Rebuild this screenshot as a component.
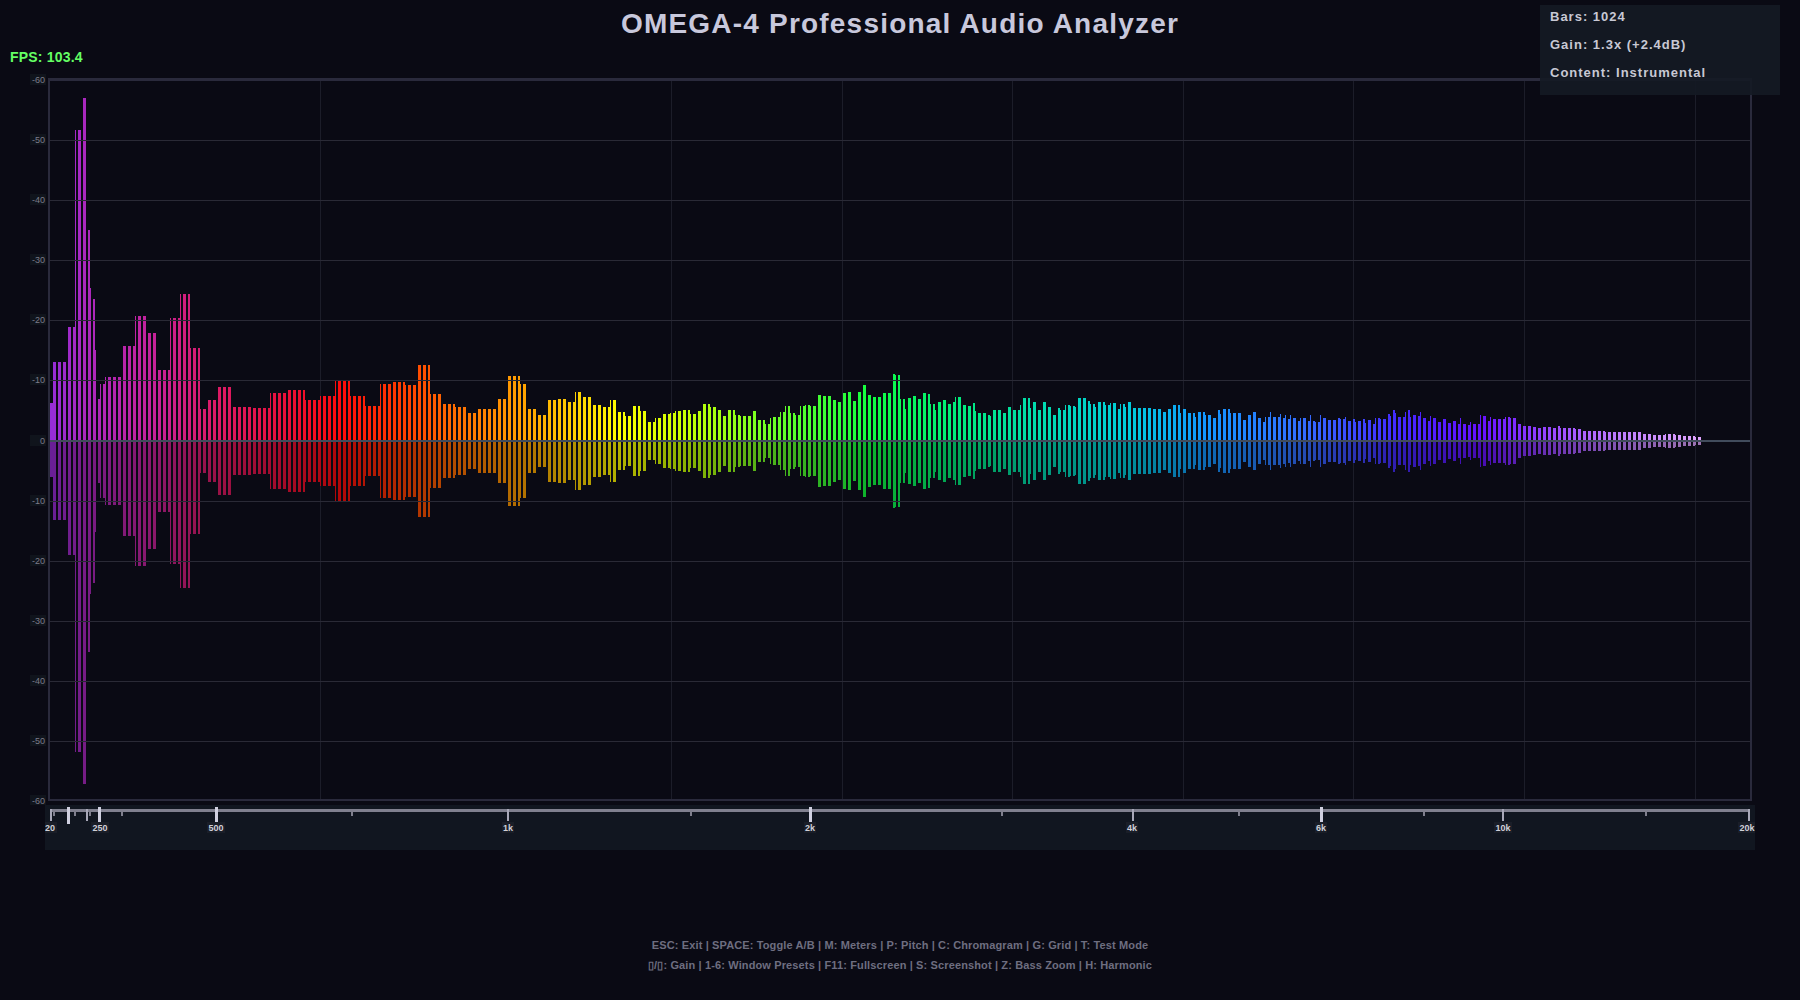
const FONT = "font-['Liberation_Sans',Arial,sans-serif]";

// [x where this plateau ends, height above the centre line]
const ENVELOPE: [number, number][] = [
  [52, 38], [67, 79], [73, 114], [80, 311], [85, 343], [88, 211], [90, 153], [93, 142], [95, 91], [98, 42],
  [104, 57], [120, 64], [133, 95], [145, 125], [156, 108], [168, 71], [178, 123], [188, 147], [198, 93],
  [206, 32], [215, 41], [230, 54], [250, 34], [268, 33], [285, 48], [303, 51], [318, 41], [334, 45], [349, 60],
  [364, 45], [378, 35], [391, 57], [404, 59], [417, 56], [429, 76], [442, 47], [454, 37], [466, 34], [476, 28],
  [497, 32], [507, 42], [519, 65], [527, 57], [537, 32], [547, 26], [555, 41], [565, 42], [573, 39], [582, 49],
  [592, 44], [600, 36], [608, 34], [615, 41], [623, 29], [632, 25], [638, 35], [646, 30], [653, 19], [661, 23],
  [668, 27], [674, 28], [681, 30], [688, 31], [695, 27], [701, 30], [708, 37], [715, 34], [721, 31], [726, 25],
  [733, 31], [739, 26], [751, 25], [756, 30], [763, 21], [768, 17], [772, 23], [779, 24], [784, 29], [789, 35],
  [794, 28], [799, 26], [804, 35], [809, 36], [815, 35], [821, 46], [831, 45], [836, 41], [841, 39], [847, 48],
  [852, 49], [857, 40], [861, 49], [866, 56], [871, 46], [880, 44], [891, 48], [894, 67], [899, 66], [903, 42],
  [907, 32], [912, 43], [917, 45], [920, 42], [925, 48], [929, 47], [934, 37], [937, 31], [942, 39], [945, 41],
  [950, 37], [954, 39], [962, 44], [965, 36], [970, 35], [974, 38], [977, 30], [985, 28], [988, 26], [992, 25],
  [1000, 31], [1007, 28], [1012, 34], [1018, 31], [1022, 36], [1028, 43], [1031, 33], [1035, 39], [1042, 31],
  [1045, 39], [1052, 34], [1055, 26], [1058, 33], [1063, 31], [1068, 36], [1073, 35], [1076, 34], [1085, 43],
  [1088, 40], [1093, 37], [1097, 34], [1103, 39], [1108, 36], [1115, 38], [1118, 32], [1123, 37], [1126, 34],
  [1131, 39], [1136, 33], [1143, 33], [1152, 33], [1161, 32], [1166, 29], [1172, 32], [1178, 36], [1182, 28],
  [1186, 32], [1193, 28], [1195, 24], [1203, 29], [1204, 21], [1210, 26], [1215, 23], [1218, 31], [1221, 27],
  [1228, 32], [1234, 28], [1242, 28], [1247, 21], [1252, 26], [1256, 29], [1260, 23], [1264, 19], [1269, 24],
  [1272, 29], [1279, 24], [1282, 27], [1284, 23], [1286, 26], [1289, 22], [1292, 26], [1295, 23], [1298, 20],
  [1302, 23], [1305, 23], [1309, 20], [1311, 26], [1314, 20], [1318, 19], [1322, 26], [1325, 23], [1330, 21],
  [1335, 21], [1338, 23], [1343, 22], [1346, 24], [1350, 20], [1354, 22], [1357, 19], [1362, 20], [1364, 22],
  [1367, 18], [1370, 21], [1374, 17], [1378, 23], [1385, 22], [1388, 27], [1392, 25], [1394, 31], [1397, 28],
  [1400, 24], [1402, 27], [1404, 24], [1406, 29], [1408, 31], [1411, 24], [1415, 26], [1418, 25], [1422, 29],
  [1425, 23], [1428, 20], [1432, 25], [1437, 23], [1440, 19], [1443, 22], [1447, 22], [1450, 18], [1455, 20],
  [1458, 17], [1462, 23], [1465, 17], [1469, 16], [1472, 19], [1475, 17], [1478, 17], [1481, 26], [1485, 25],
  [1488, 20], [1492, 24], [1497, 22], [1503, 22], [1508, 24], [1513, 23], [1517, 23], [1520, 17], [1525, 15],
  [1530, 15], [1535, 14], [1540, 13], [1547, 14], [1552, 14], [1556, 13], [1559, 15], [1573, 13], [1582, 12],
  [1593, 10], [1603, 10], [1613, 9], [1633, 9], [1640, 9], [1650, 7], [1652, 8], [1663, 6], [1673, 7], [1682, 6],
  [1693, 5], [1701, 4],
];

// colour stops along the x axis, as [x, r, g, b]
const COLOURS: number[][] = [
  [50, 150, 45, 215], [85, 170, 40, 190], [150, 196, 34, 156], [200, 216, 28, 112], [280, 232, 16, 60],
  [340, 255, 10, 10], [400, 255, 60, 0], [450, 255, 106, 0], [520, 255, 160, 0], [570, 255, 204, 0],
  [620, 255, 255, 0], [680, 204, 255, 0], [760, 119, 255, 34], [870, 16, 255, 64], [950, 0, 238, 119],
  [1030, 0, 221, 170], [1130, 0, 204, 221], [1200, 17, 153, 255], [1300, 51, 110, 255], [1400, 68, 40, 255],
  [1480, 102, 17, 255], [1560, 160, 80, 255], [1620, 190, 125, 255], [1701, 225, 165, 255],
];

const colourAt = (x: number, dim: number) => {
  let i = 0;
  while (i < COLOURS.length - 2 && COLOURS[i + 1][0] < x) i++;
  const [x0, r0, g0, b0] = COLOURS[i];
  const [x1, r1, g1, b1] = COLOURS[i + 1];
  const t = Math.min(1, Math.max(0, (x - x0) / (x1 - x0)));
  const mix = (a: number, b: number) => Math.round((a + (b - a) * t) * dim);
  return `rgb(${mix(r0, r1)},${mix(g0, g1)},${mix(b0, b1)})`;
};

const heightAt = (x: number) => {
  const seg = ENVELOPE.find(([end]) => x <= end);
  return seg ? seg[1] : 0;
};

const CENTER = 441;
const LOWER_DIM = 0.7;
const bars: { x: number; w: number; h: number }[] = [];
for (let i = 0; ; i++) {
  const x = 53 + Math.floor(i * 2.5);
  if (x > 1701) break;
  bars.push({ x, w: i % 2 === 0 ? 2 : 1, h: heightAt(x) });
}

const DB_LABELS: [number, string][] = [
  [80, "-60"], [140, "-50"], [200, "-40"], [260, "-30"], [320, "-20"], [380, "-10"], [441, "0"],
  [501, "-10"], [561, "-20"], [621, "-30"], [681, "-40"], [741, "-50"], [801, "-60"],
];
const V_GRID = [320, 671, 842, 1012, 1183, 1353, 1524, 1695];

const Spectrum = () => (
  <svg width={1725} height={733} viewBox="30 72 1725 733" shapeRendering="crispEdges" className="block ml-[30px]">
    {V_GRID.map((x) => (
      <rect key={x} x={x} y={80} width={1} height={720} fill="#1c1d29" />
    ))}
    <rect x={50} y={403} width={3} height={38} fill={colourAt(50, 1)} />
    <rect x={50} y={441} width={3} height={36} fill={colourAt(50, LOWER_DIM)} />
    {bars.map((b) => (
      <g key={b.x}>
        <rect x={b.x} y={CENTER - b.h} width={b.w} height={b.h} fill={colourAt(b.x, 1)} />
        <rect x={b.x} y={CENTER} width={b.w} height={b.h} fill={colourAt(b.x, LOWER_DIM)} />
      </g>
    ))}
    {DB_LABELS.filter(([y]) => y !== 80 && y !== 801 && y !== 441).map(([y]) => (
      <rect key={y} x={49} y={y} width={1701} height={1} fill="#2a2a36" />
    ))}
    <rect x={49} y={440} width={1701} height={2} fill="#414c5c" />
    <rect x={48} y={78} width={1704} height={3} fill="#2a2a3c" />
    <rect x={48} y={799} width={1704} height={2} fill="#2a2a3c" />
    <rect x={48} y={78} width={2} height={723} fill="#2a2a3c" />
    <rect x={1750} y={78} width={2} height={723} fill="#2a2a3c" />
    {DB_LABELS.map(([y, label]) => (
      <g key={y}>
        <rect x={30} y={y - 6} width={16} height={11} fill="#10141c" />
        <text x={45} y={y + 3} textAnchor="end" fontSize={9} fill="#7c7c8a" fontFamily="Liberation Sans, Arial, sans-serif" shapeRendering="auto">
          {label}
        </text>
      </g>
    ))}
  </svg>
);

// x, width, bottom of the tick, colour, top of the tick
const TICKS: [number, number, number, string, number][] = [
  [50, 2, 821, "#a8a8b8", 809], [53, 2, 816, "#80808e", 809], [67, 3, 824, "#d0d0e0", 807], [74, 2, 816, "#80808e", 809],
  [86, 2, 821, "#a8a8b8", 809], [89, 2, 816, "#80808e", 809], [98, 3, 822, "#d0d0e0", 807], [121, 2, 816, "#80808e", 809],
  [215, 3, 822, "#d0d0e0", 807], [351, 2, 816, "#80808e", 809], [507, 2, 821, "#a8a8b8", 809], [690, 2, 816, "#80808e", 809],
  [809, 3, 822, "#d0d0e0", 807], [1001, 2, 816, "#80808e", 809], [1132, 2, 821, "#a8a8b8", 809], [1238, 2, 816, "#80808e", 809],
  [1320, 3, 822, "#d0d0e0", 807], [1423, 2, 816, "#80808e", 809], [1502, 2, 821, "#a8a8b8", 809], [1645, 2, 816, "#80808e", 809],
  [1748, 2, 821, "#a8a8b8", 809],
];
const FREQ_LABELS: [number, string, number][] = [
  [50, "20", 14], [100, "250", 18], [216, "500", 18], [508, "1k", 12], [810, "2k", 12], [1132, "4k", 12],
  [1321, "6k", 12], [1503, "10k", 18], [1747, "20k", 18],
];

const FreqAxis = () => (
  <div className="ml-[45px] w-[1710px] h-[45px] bg-[#111620]">
    <svg width={1710} height={45} viewBox="45 805 1710 45" shapeRendering="crispEdges" className="block">
      <rect x={50} y={809} width={1700} height={3} fill="#80808f" />
      {TICKS.map(([x, w, bottom, fill, top]) => (
        <rect key={x} x={x} y={top} width={w} height={bottom - top} fill={fill} />
      ))}
      {FREQ_LABELS.map(([x, label, w]) => (
        <g key={label}>
          <rect x={x - w / 2} y={822} width={w} height={11} fill="#1a1e28" />
          <text x={x} y={831} textAnchor="middle" fontSize={9} fontWeight={700} fill="#d0d0d8" fontFamily="Liberation Sans, Arial, sans-serif" shapeRendering="auto">
            {label}
          </text>
        </g>
      ))}
    </svg>
  </div>
);

export default function App() {
  return (
    <div className={`relative w-[1800px] h-[1000px] overflow-hidden bg-[#0a0a14] ${FONT}`}>
      <h1 className="h-[48px] text-center text-[28px] leading-[48px] font-bold tracking-[1.2px] text-[#c8c8dc]">
        OMEGA-4 Professional Audio Analyzer
      </h1>
      <div className="h-[24px] pl-[10px] text-[14px] leading-[18px] font-bold tracking-[0.2px] text-[#64ff64]">FPS: 103.4</div>
      <Spectrum />
      <FreqAxis />
      <div className="mt-[85px] text-center text-[11px] leading-[20px] font-bold tracking-[0.13px] text-[#6e6e80]">
        <p>ESC: Exit | SPACE: Toggle A/B | M: Meters | P: Pitch | C: Chromagram | G: Grid | T: Test Mode</p>
        <p>▯/▯: Gain | 1-6: Window Presets | F11: Fullscreen | S: Screenshot | Z: Bass Zoom | H: Harmonic</p>
      </div>
      <div className="absolute left-[1540px] top-[5px] w-[240px] h-[90px] bg-[#141a24]/90 pl-[10px] text-[13px] font-bold tracking-[1px] text-[#c8c8d4]">
        <p className="h-[28px] leading-[24px]">Bars: 1024</p>
        <p className="h-[28px] leading-[24px]">Gain: 1.3x (+2.4dB)</p>
        <p className="h-[28px] leading-[24px]">Content: Instrumental</p>
      </div>
    </div>
  );
}
